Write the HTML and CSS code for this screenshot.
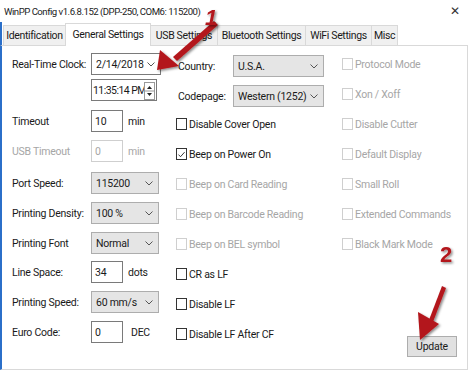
FILE: index.html
```html
<!DOCTYPE html>
<html>
<head>
<meta charset="utf-8">
<link rel="stylesheet" href="styles.css">
</head>
<body>
<div class="window">
  <div class="titlebar">
    <span class="title">WinPP Config v1.6.8.152 (DPP-250, COM6: 115200)</span>
    <span class="close">✕</span>
  </div>
  <div class="tabs">
    <div class="tab t1">Identification</div>
    <div class="tab t2 active">General Settings</div>
    <div class="tab t3">USB Settings</div>
    <div class="tab t4">Bluetooth Settings</div>
    <div class="tab t5">WiFi Settings</div>
    <div class="tab t6">Misc</div>
  </div>
  <div class="panel">
    <div class="col left">
      <div class="row"><span class="lbl">Real-Time Clock:</span><div class="date">2/14/2018<svg class="chev" viewBox="0 0 8 5" width="8" height="5"><polyline points="0.5,0.5 4,4 7.5,0.5" fill="none" stroke="#555" stroke-width="1"/></svg></div></div>
      <div class="row time-row"><span class="lbl"></span><div class="time">11:35:14 PM<span class="spin"><svg viewBox="0 0 9 16" width="9" height="16"><polygon points="2,6 4.5,3 7,6" fill="#222"/><line x1="0" y1="8" x2="9" y2="8" stroke="#999"/><polygon points="2,10 4.5,13 7,10" fill="#222"/></svg></span></div></div>
      <div class="row r-timeout"><span class="lbl">Timeout</span><div class="num">10</div><span class="unit">min</span></div>
      <div class="row dis"><span class="lbl">USB Timeout</span><div class="num">0</div><span class="unit">min</span></div>
      <div class="row r-port"><span class="lbl">Port Speed:</span><div class="sel">115200<svg class="chev" viewBox="0 0 8 5" width="8" height="5"><polyline points="0.5,0.5 4,4 7.5,0.5" fill="none" stroke="#555" stroke-width="1"/></svg></div></div>
      <div class="row"><span class="lbl">Printing Density:</span><div class="sel">100 %<svg class="chev" viewBox="0 0 8 5" width="8" height="5"><polyline points="0.5,0.5 4,4 7.5,0.5" fill="none" stroke="#555" stroke-width="1"/></svg></div></div>
      <div class="row"><span class="lbl">Printing Font</span><div class="sel">Normal<svg class="chev" viewBox="0 0 8 5" width="8" height="5"><polyline points="0.5,0.5 4,4 7.5,0.5" fill="none" stroke="#555" stroke-width="1"/></svg></div></div>
      <div class="row r-line"><span class="lbl">Line Space:</span><div class="num">34</div><span class="unit">dots</span></div>
      <div class="row"><span class="lbl">Printing Speed:</span><div class="sel">60 mm/s<svg class="chev" viewBox="0 0 8 5" width="8" height="5"><polyline points="0.5,0.5 4,4 7.5,0.5" fill="none" stroke="#555" stroke-width="1"/></svg></div></div>
      <div class="row"><span class="lbl">Euro Code:</span><div class="num">0</div><span class="unit dec">DEC</span></div>
    </div>
    <div class="col mid">
      <div class="row"><span class="lbl2">Country:</span><div class="sel wide">U.S.A.<svg class="chev" viewBox="0 0 8 5" width="8" height="5"><polyline points="0.5,0.5 4,4 7.5,0.5" fill="none" stroke="#555" stroke-width="1"/></svg></div></div>
      <div class="row"><span class="lbl2">Codepage:</span><div class="sel wide">Western (1252)<svg class="chev" viewBox="0 0 8 5" width="8" height="5"><polyline points="0.5,0.5 4,4 7.5,0.5" fill="none" stroke="#555" stroke-width="1"/></svg></div></div>
      <div class="checks">
        <div class="chk"><span class="box"></span>Disable Cover Open</div>
        <div class="chk"><span class="box"><svg viewBox="0 0 11 11" width="11" height="11"><path d="M1.8 5.6 L4.3 8.2 L9.3 2.6" fill="none" stroke="#222" stroke-width="1.1"/></svg></span>Beep on Power On</div>
        <div class="chk dis"><span class="box"></span>Beep on Card Reading</div>
        <div class="chk dis"><span class="box"></span>Beep on Barcode Reading</div>
        <div class="chk dis"><span class="box"></span>Beep on BEL symbol</div>
        <div class="chk"><span class="box"></span>CR as LF</div>
        <div class="chk"><span class="box"></span>Disable LF</div>
        <div class="chk"><span class="box"></span>Disable LF After CF</div>
      </div>
    </div>
    <div class="col right">
      <div class="chk dis"><span class="box"></span>Protocol Mode</div>
      <div class="chk dis"><span class="box"></span>Xon / Xoff</div>
      <div class="chk dis"><span class="box"></span>Disable Cutter</div>
      <div class="chk dis"><span class="box"></span>Default Display</div>
      <div class="chk dis"><span class="box"></span>Small Roll</div>
      <div class="chk dis"><span class="box"></span>Extended Commands</div>
      <div class="chk dis"><span class="box"></span>Black Mark Mode</div>
      <div class="spacer"></div>
      <div class="btnrow"><div class="btn">Update</div></div>
    </div>
  </div>
  <svg class="arrows" width="468" height="370" viewBox="0 0 468 370">
    <defs>
      <filter id="sh" x="-30%" y="-30%" width="160%" height="160%">
        <feDropShadow dx="1.5" dy="1.5" stdDeviation="1" flood-color="#000" flood-opacity="0.45"/>
      </filter>
    </defs>
    <g filter="url(#sh)" fill="#b3171b">
      <polygon points="214,21 218,25 177,61 173,57"/>
      <polygon points="157,70 160,50 179,66"/>
      <polygon points="442,286 446,288 433,322 429,320"/>
      <polygon points="420,340 418,312 439,324"/>
    </g>
    <text x="205" y="25" class="num1" filter="url(#sh)">1</text>
    <text x="440" y="262" class="num2" filter="url(#sh)">2</text>
  </svg>
</div>
</body>
</html>
```
FILE: styles.css
```css
* { box-sizing: border-box; }
html, body { margin: 0; padding: 0; }
body {
  width: 468px; height: 370px; overflow: hidden;
  font-family: "Roboto", "Liberation Sans", sans-serif;
  font-size: 10.5px; letter-spacing: -0.25px; color: #1a1a1a; background: #fff;
}
.window { position: relative; width: 468px; height: 370px; background: #fff; }
.titlebar {
  height: 22px; display: flex; align-items: center; justify-content: space-between;
  padding: 0 8px 0 4px; background: #fff;
}
.title { font-size: 9.6px; letter-spacing: -0.5px; color: #222; }
.close { font-size: 12px; color: #333; }
.tabs {
  height: 23px; display: flex; align-items: flex-end; padding-left: 1px;
  border-left: 2px solid #2b6fc9; white-space: nowrap;
}
.tab {
  height: 20px; display: flex; align-items: center; justify-content: center;
  background: #f0f0f0; border: 1px solid #d9d9d9; border-bottom: none; margin-right: -1px;
  color: #1a1a1a; letter-spacing: -0.35px; flex: none;
}
.t1 { width: 63px; }
.t2 { width: 86px; }
.t3 { width: 68px; }
.t4 { width: 89px; }
.t5 { width: 67px; }
.t6 { width: 27px; }
.tab.active { height: 23px; background: #fff; position: relative; z-index: 1; padding-bottom: 2px; margin-bottom: -1px; }
.panel {
  height: 325px; border: 1px solid #d9d9d9; border-left: 2px solid #2b6fc9;
  display: flex; background: #fff; white-space: nowrap;
}
.col { display: flex; flex-direction: column; }
.left { width: 172px; padding-left: 10px; padding-top: 7px; gap: 8px; }
.row { display: flex; align-items: center; height: 22px; }
.lbl { width: 79px; flex: none; }
.time-row { margin-top: -4px; }
.r-timeout { margin-top: 1px; }
.r-port { margin-top: 2px; }
.r-line { margin-top: -1px; }
.date, .time, .num, .sel {
  height: 22px; display: flex; align-items: center; padding-left: 4px; position: relative;
}
.date { width: 70px; border: 1px solid #7a7a7a; background: #fff; }
.time { width: 66px; border: 1px solid #7a7a7a; background: #fff; padding-left: 1px; letter-spacing: -0.55px; }
.num { width: 32px; border: 1px solid #7a7a7a; background: #fff; padding-left: 3px; }
.sel { width: 68px; border: 1px solid #adadad; background: #e5e5e5; }
.sel.wide { width: 91px; }
.chev { position: absolute; right: 5px; top: 8px; }
.spin { position: absolute; right: 1px; top: 2px; width: 11px; height: 18px; border: 1px solid #999; background: #fff; display: flex; }
.unit { margin-left: 5px; }
.unit.dec { margin-left: 8px; }
.row.dis { color: #a6a6a6; }
.row.dis .num { border-color: #cfcfcf; }
.mid { width: 167px; padding-left: 2px; padding-top: 9px; gap: 8px; }
.lbl2 { width: 57px; padding-left: 2px; flex: none; }
.checks { display: flex; flex-direction: column; margin-top: -6px; }
.chk { height: 30px; display: flex; align-items: center; }
.box {
  width: 11px; height: 12px; border: 1px solid #333; background: #fff; margin-right: 2px; flex: none;
  display: flex; align-items: center; justify-content: center;
}
.chk.dis { color: #a6a6a6; }
.chk.dis .box { border-color: #cfcfcf; }
.right { flex: 1; padding-left: 1px; padding-top: 3px; }
.spacer { flex: 1; }
.btnrow { display: flex; justify-content: flex-end; padding-right: 10px; padding-bottom: 12px; }
.btn {
  width: 50px; height: 21px; border: 1px solid #adadad; background: #e1e1e1;
  display: flex; align-items: center; justify-content: center;
}
.arrows { position: absolute; left: 0; top: 0; pointer-events: none; }
.num1, .num2 { font-family: "Liberation Sans", sans-serif; font-weight: bold; font-size: 22px; fill: #b3171b; letter-spacing: 0; }
.num1 { font-style: italic; }
```
